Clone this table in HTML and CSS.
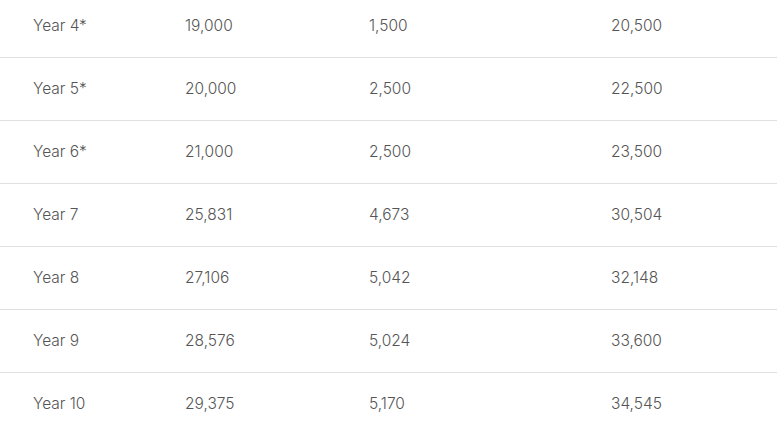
FILE: index.html
```html
<!DOCTYPE html>
<html>
<head>
<meta charset="utf-8">
<link rel="stylesheet" href="styles.css">
</head>
<body>
<table class="fees">
  <colgroup>
    <col class="c1"><col class="c2"><col class="c3"><col class="c4">
  </colgroup>
  <tbody>
    <tr><td>Year 4*</td><td>19,000</td><td>1,500</td><td>20,500</td></tr>
    <tr><td>Year 5*</td><td>20,000</td><td>2,500</td><td>22,500</td></tr>
    <tr><td>Year 6*</td><td>21,000</td><td>2,500</td><td>23,500</td></tr>
    <tr><td>Year 7</td><td>25,831</td><td>4,673</td><td>30,504</td></tr>
    <tr><td>Year 8</td><td>27,106</td><td>5,042</td><td>32,148</td></tr>
    <tr><td>Year 9</td><td>28,576</td><td>5,024</td><td>33,600</td></tr>
    <tr><td>Year 10</td><td>29,375</td><td>5,170</td><td>34,545</td></tr>
  </tbody>
</table>
</body>
</html>
```
FILE: styles.css
```css
html, body {
  margin: 0;
  padding: 0;
  background: #fff;
  overflow: hidden;
}
.fees {
  width: 100%;
  border-collapse: collapse;
  table-layout: fixed;
  margin-top: -5px;
  font-family: "Inter", "Open Sans", sans-serif;
  font-size: 15.5px;
  font-weight: 300;
  color: #555;
}
.c1 { width: 185px; }
.c2 { width: 184px; }
.c3 { width: 242px; }
.fees td {
  height: 60px;
  padding: 0 0 2px 0;
  vertical-align: middle;
  border-bottom: 1px solid #e0e0e0;
  white-space: nowrap;
}
.fees td:first-child {
  padding-left: 33px;
}
```
